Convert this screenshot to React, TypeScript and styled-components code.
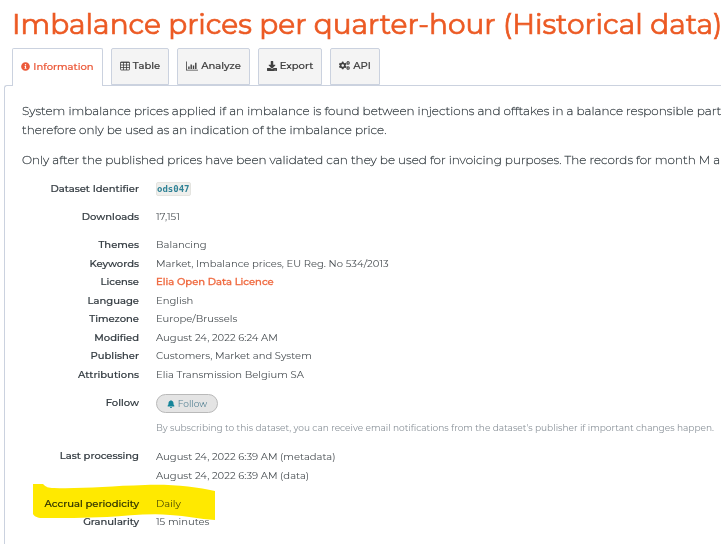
import React from "react";
import styled, { createGlobalStyle } from "styled-components";
import { FaInfoCircle, FaDownload, FaCogs, FaBell } from "react-icons/fa";

const GlobalStyle = createGlobalStyle`
  *, *::before, *::after { box-sizing: border-box; }
  body {
    margin: 0;
    background: #fff;
    color: #3c4449;
    font-family: Montserrat, Inter, "Open Sans", sans-serif;
    font-size: 10px;
    line-height: 18px;
    overflow: hidden;
  }
`;

const Page = styled.main`
  display: flex;
  flex-direction: column;
  min-height: 100vh;
  padding: 4px 0 0 4px;
`;

const Title = styled.h1`
  margin: 0 0 4px 8px;
  color: #ec5a24;
  font-size: 28px;
  font-weight: 400;
  line-height: 40px;
  white-space: nowrap;
  -webkit-text-stroke: 0.7px currentColor;
`;

const Tabs = styled.nav`
  display: flex;
  gap: 8px;
  padding-left: 8px;
`;

const Tab = styled.button<{ $active?: boolean; $width: number }>`
  display: flex;
  align-items: center;
  justify-content: center;
  gap: 3px;
  width: ${(p) => p.$width}px;
  height: ${(p) => (p.$active ? 38 : 37)}px;
  margin-bottom: ${(p) => (p.$active ? -1 : 0)}px;
  padding: 0 0 2px;
  border: 1px solid #cbd2df;
  border-bottom: ${(p) => (p.$active ? "0" : "1px solid #cbd2df")};
  border-radius: 2px 2px 0 0;
  background: ${(p) => (p.$active ? "#fff" : "#f4f4f4")};
  color: ${(p) => (p.$active ? "#ec5a3a" : "#404040")};
  font: 500 10px/18px Montserrat, Inter, "Open Sans", sans-serif;
  white-space: nowrap;
  z-index: 1;
  -webkit-text-stroke: 0.2px currentColor;

  svg { flex: none; }
`;

const Panel = styled.section`
  flex: 1;
  padding: 15px 0 12px 17px;
  border: 1px solid #cbd2df;
  border-width: 1px 0 0 1px;
  border-radius: 3px 0 0 0;
`;

const Paragraph = styled.p`
  margin: 0 0 11px;
  color: #3c4449;
  font-size: 12px;
  font-weight: 200;
  line-height: 19px;
  white-space: nowrap;
  -webkit-text-stroke: 0.3px currentColor;
`;

const Metadata = styled.dl`
  display: flex;
  flex-direction: column;
  gap: 10px;
  margin: 0;
`;

const Group = styled.div<{ $rows?: number }>`
  position: relative;
  display: grid;
  grid-auto-rows: 1fr;
  min-height: ${(p) => (p.$rows === 8 ? 148 : 18)}px;
`;

const Row = styled.div`
  display: grid;
  grid-template-columns: 117px 1fr;
  column-gap: 17px;
  position: relative;
`;

const Label = styled.dt`
  color: #343c42;
  font-weight: 500;
  text-align: right;
  white-space: nowrap;
  -webkit-text-stroke: 0.2px currentColor;
`;

const Value = styled.dd`
  margin: 0;
  color: #484e52;
  font-weight: 400;
  white-space: nowrap;
`;

const Identifier = styled.code`
  display: inline-block;
  border: 1px solid #e4e4e0;
  border-radius: 2px;
  background: #efefec;
  color: #2f8296;
  font: 700 9px/12px "DejaVu Sans Mono", "Liberation Mono", monospace;
  vertical-align: middle;
`;

const License = styled.a`
  color: #ef6a40;
  font-weight: 500;
  text-decoration: none;
  -webkit-text-stroke: 0.3px currentColor;
`;

const Follow = styled.button`
  display: flex;
  align-items: center;
  justify-content: center;
  gap: 3px;
  width: 62px;
  height: 19px;
  padding: 0;
  border: 1px solid #b9b9b9;
  border-radius: 10px;
  background: #e4e4e4;
  color: #598597;
  font: 400 9px/16px Montserrat, Inter, "Open Sans", sans-serif;

  svg { color: #16859a; }
`;

const Hint = styled.p`
  margin: 6px 0 0;
  color: #8a9299;
  font-size: 9px;
  font-weight: 400;
`;

const Line = styled.span`
  display: block;
  line-height: 19px;
`;

const Marker = styled.svg`
  position: absolute;
  top: -12px;
  left: 11px;
  width: 183px;
  height: 38px;
  mix-blend-mode: multiply;
  pointer-events: none;
`;

const TableIcon = () => (
  <svg width="10" height="10" viewBox="0 0 10 10" fill="none" stroke="currentColor" aria-hidden="true">
    <rect x=".5" y="1" width="9" height="8" rx=".6" strokeWidth=".8" />
    <path d="M.5 1.5h9M.5 4h9M.5 6.5h9M3.5 1v8M6.5 1v8" strokeWidth=".8" />
  </svg>
);

const ChartIcon = () => (
  <svg width="12" height="10" viewBox="0 0 12 10" fill="currentColor" aria-hidden="true">
    <path d="M0 .5h.8v8.2H12v.8H0zM2.2 5.4h1.4v2.5H2.2zM4.5 3.4h1.4v4.5H4.5zM6.8 4.5h1.4v3.4H6.8zM9.1 1.8h1.4v6.1H9.1z" />
  </svg>
);

const tabs = [
  { name: "Information", icon: <FaInfoCircle size={9} />, width: 91, active: true },
  { name: "Table", icon: <TableIcon />, width: 58 },
  { name: "Analyze", icon: <ChartIcon />, width: 73 },
  { name: "Export", icon: <FaDownload size={10} />, width: 64 },
  { name: "API", icon: <FaCogs size={11} />, width: 50 },
];

const details: [string, React.ReactNode][] = [
  ["Themes", "Balancing"],
  ["Keywords", "Market, Imbalance prices, EU Reg. No 534/2013"],
  ["License", <License href="#license">Elia Open Data Licence</License>],
  ["Language", "English"],
  ["Timezone", "Europe/Brussels"],
  ["Modified", "August 24, 2022 6:24 AM"],
  ["Publisher", "Customers, Market and System"],
  ["Attributions", "Elia Transmission Belgium SA"],
];

const Field = ({ label, children }: { label: string; children: React.ReactNode }) => (
  <Row>
    <Label>{label}</Label>
    <Value>{children}</Value>
  </Row>
);

export default function App() {
  return (
    <>
      <GlobalStyle />
      <Page>
        <Title>Imbalance prices per quarter-hour (Historical data)</Title>
        <Tabs>
          {tabs.map((t) => (
            <Tab key={t.name} type="button" $active={t.active} $width={t.width}>
              {t.icon}
              {t.name}
            </Tab>
          ))}
        </Tabs>
        <Panel>
          <Paragraph>
            System imbalance prices applied if an imbalance is found between injections and offtakes in a balance responsible part
            <br />
            therefore only be used as an indication of the imbalance price.
          </Paragraph>
          <Paragraph>
            Only after the published prices have been validated can they be used for invoicing purposes. The records for month M a
          </Paragraph>
          <Metadata>
            <Group>
              <Field label="Dataset Identifier">
                <Identifier>ods047</Identifier>
              </Field>
            </Group>
            <Group>
              <Field label="Downloads">17,151</Field>
            </Group>
            <Group $rows={8}>
              {details.map(([label, value]) => (
                <Field key={label} label={label}>{value}</Field>
              ))}
            </Group>
            <Group>
              <Field label="Follow">
                <Follow type="button">
                  <FaBell size={8} />
                  Follow
                </Follow>
                <Hint>
                  By subscribing to this dataset, you can receive email notifications from the dataset's publisher if important changes happen.
                </Hint>
              </Field>
            </Group>
            <Group>
              <Field label="Last processing">
                <Line>August 24, 2022 6:39 AM (metadata)</Line>
                <Line>August 24, 2022 6:39 AM (data)</Line>
              </Field>
            </Group>
            <Group>
              <Field label="Accrual periodicity">Daily</Field>
              <Field label="Granularity">15 minutes</Field>
              <Marker viewBox="0 0 183 38" aria-hidden="true">
                <path
                  d="M0 1H10C13 4 15 5 21 5C48 6 76 3 112 2C139 1 164 4 182 8V37C166 36 154 33 137 32C117 30 94 33 74 34C52 35 29 35 9 35C4 35 1 33 0 31Z"
                  fill="#ffe900"
                />
              </Marker>
            </Group>
          </Metadata>
        </Panel>
      </Page>
    </>
  );
}
